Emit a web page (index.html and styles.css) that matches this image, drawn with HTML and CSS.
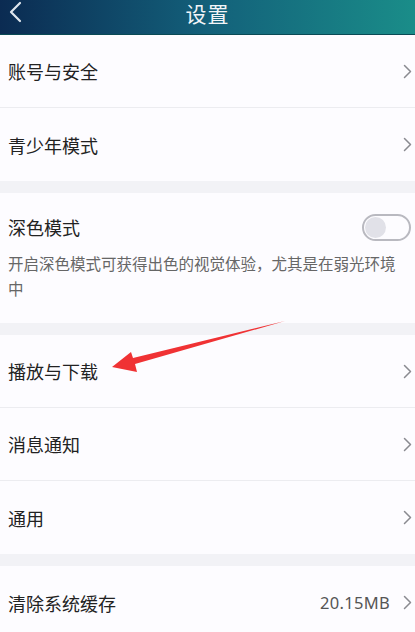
FILE: index.html
```html
<!DOCTYPE html>
<html lang="zh-CN">
<head>
    <meta charset="UTF-8">
    <meta name="viewport" content="width=device-width, initial-scale=1.0">
    <title>设置</title>
    <link rel="stylesheet" href="styles.css">
</head>
<body>
    <div class="header">
        <svg class="back" width="14" height="22" viewBox="0 0 14 22">
            <path d="M12 2 L3 11 L12 20" fill="none" stroke="#dfe6ee" stroke-width="2.2" stroke-linecap="round" stroke-linejoin="round"/>
        </svg>
        <h1>设置</h1>
    </div>

    <div class="group">
        <div class="row">
            <span class="label">账号与安全</span>
            <svg class="chev" width="9" height="15" viewBox="0 0 9 15"><path d="M1.5 1.5 L7.5 7.5 L1.5 13.5"/></svg>
        </div>
        <div class="row">
            <span class="label">青少年模式</span>
            <svg class="chev" width="9" height="15" viewBox="0 0 9 15"><path d="M1.5 1.5 L7.5 7.5 L1.5 13.5"/></svg>
        </div>
    </div>

    <div class="group dark-mode">
        <div class="dm-head">
            <span class="label">深色模式</span>
            <div class="toggle"><div class="knob"></div></div>
        </div>
        <p class="desc">开启深色模式可获得出色的视觉体验，尤其是在弱光环境中</p>
    </div>

    <div class="group">
        <div class="row">
            <span class="label">播放与下载</span>
            <svg class="chev" width="9" height="15" viewBox="0 0 9 15"><path d="M1.5 1.5 L7.5 7.5 L1.5 13.5"/></svg>
        </div>
        <div class="row">
            <span class="label">消息通知</span>
            <svg class="chev" width="9" height="15" viewBox="0 0 9 15"><path d="M1.5 1.5 L7.5 7.5 L1.5 13.5"/></svg>
        </div>
        <div class="row">
            <span class="label">通用</span>
            <svg class="chev" width="9" height="15" viewBox="0 0 9 15"><path d="M1.5 1.5 L7.5 7.5 L1.5 13.5"/></svg>
        </div>
    </div>

    <div class="group">
        <div class="row">
            <span class="label">清除系统缓存</span>
            <span class="value">20.15MB</span>
            <svg class="chev" width="9" height="15" viewBox="0 0 9 15"><path d="M1.5 1.5 L7.5 7.5 L1.5 13.5"/></svg>
        </div>
    </div>

    <!-- flecha roja encima -->
    <svg class="arrow" width="415" height="632" viewBox="0 0 415 632">
        <polygon points="112,367 131,352 133,358 285,321 135,364 137,372" fill="#f03234"/>
    </svg>
</body>
</html>
```

FILE: styles.css
```css
body {
    margin: 0;
    padding: 0;
    width: 415px;
    height: 632px;
    overflow: hidden;
    background: #f2f2f6;
    font-family: "Noto Sans CJK SC", "Noto Sans", sans-serif;
    color: #222;
    position: relative;
}
.header {
    height: 34px;
    background: linear-gradient(to right, #0b2b52, #13607a 50%, #1a8d89);
    border-bottom: 1px solid #0a4a55;
    position: relative;
    display: flex;
    justify-content: center;
    align-items: flex-start;
}
.header h1 {
    margin: 1px 0 0;
    font-size: 21px;
    font-weight: normal;
    line-height: 24px;
    color: #f2f5f8;
    letter-spacing: 1px;
}
.back {
    position: absolute;
    left: 8px;
    top: 1px;
}
.group {
    background: #fdfcff;
    margin-bottom: 12px;
}
.row {
    height: 72px;
    display: flex;
    align-items: center;
    padding: 0 3px 0 8px;
    border-bottom: 1px solid #ececf0;
}
.row:last-child {
    border-bottom: none;
    height: 73px;
}
.label {
    font-size: 18px;
    line-height: 24px;
    flex: 1;
}
.value {
    font-size: 16.5px;
    color: #555;
    margin-right: 13px;
    font-family: "Noto Sans", sans-serif;
    letter-spacing: 0.3px;
}
.chev {
    fill: none;
    stroke: #8a8a90;
    stroke-width: 1.5;
    stroke-linecap: round;
    stroke-linejoin: round;
}
.dark-mode {
    height: 130px;
    box-sizing: border-box;
    padding: 20px 4px 0 8px;
}
.dm-head {
    display: flex;
    align-items: center;
    height: 28px;
}
.toggle {
    width: 44px;
    height: 23px;
    border: 2px solid #b9b9c0;
    border-radius: 14px;
    display: flex;
    align-items: center;
    padding-left: 1px;
}
.knob {
    width: 21px;
    height: 21px;
    border-radius: 50%;
    background: #e1e1e8;
}
.desc {
    margin: 10px 0 0;
    font-size: 15.5px;
    line-height: 25px;
    color: #666;
    padding-right: 12px;
}
.arrow {
    position: absolute;
    top: 0;
    left: 0;
    pointer-events: none;
}
```
